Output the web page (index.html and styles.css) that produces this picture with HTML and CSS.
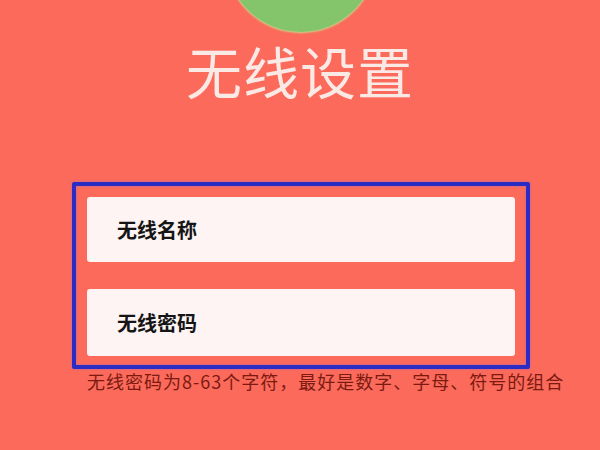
FILE: index.html
```html
<!DOCTYPE html>
<html lang="zh-CN">
<head>
    <meta charset="UTF-8">
    <meta name="viewport" content="width=device-width, initial-scale=1.0">
    <title>无线设置</title>
    <link rel="stylesheet" href="styles.css">
</head>
<body>
    <div class="logo"></div>
    <h1 class="title">无线设置</h1>

    <form class="wifi-form">
        <div class="field">无线名称</div>
        <div class="field field-pass">无线密码</div>
    </form>
    <p class="hint">无线密码为8-63个字符，最好是数字、字母、符号的组合</p>
</body>
</html>
```

FILE: styles.css
```css
body {
    margin: 0;
    background-color: #fb6a5a;
    font-family: "Noto Sans CJK SC", "Noto Sans", sans-serif;
    overflow: hidden;
}
.logo {
    width: 150px;
    height: 150px;
    margin: -118px auto 0;
    border-radius: 50%;
    background-color: #84c46a;
    box-shadow: 0 0 2px 1px #c9d98a;
    transform: translateX(1px);
}
.title {
    margin: 10px 0 0;
    text-align: center;
    font-size: 56px;
    font-weight: 400;
    line-height: 1;
    color: #fbe9e5;
    letter-spacing: 1px;
}
.wifi-form {
    width: 428px;
    margin: 84px 0 0 72px;
    padding: 11px 11px 9px;
    border: 4px solid #2c2cc4;
    border-radius: 2px;
    box-shadow: 0 0 2px #8e6ad8, inset 0 0 2px #8e6ad8;
}
.field {
    height: 65px;
    padding-left: 30px;
    display: flex;
    align-items: center;
    background-color: #fdf4f3;
    border-radius: 3px;
    font-size: 20px;
    font-weight: 700;
    color: #151515;
}
.field-pass {
    height: 67px;
    margin-top: 27px;
}
.hint {
    margin: 2px 0 0 87px;
    font-size: 18px;
    letter-spacing: 1px;
    color: #7c1a12;
    line-height: 20px;
}
```
